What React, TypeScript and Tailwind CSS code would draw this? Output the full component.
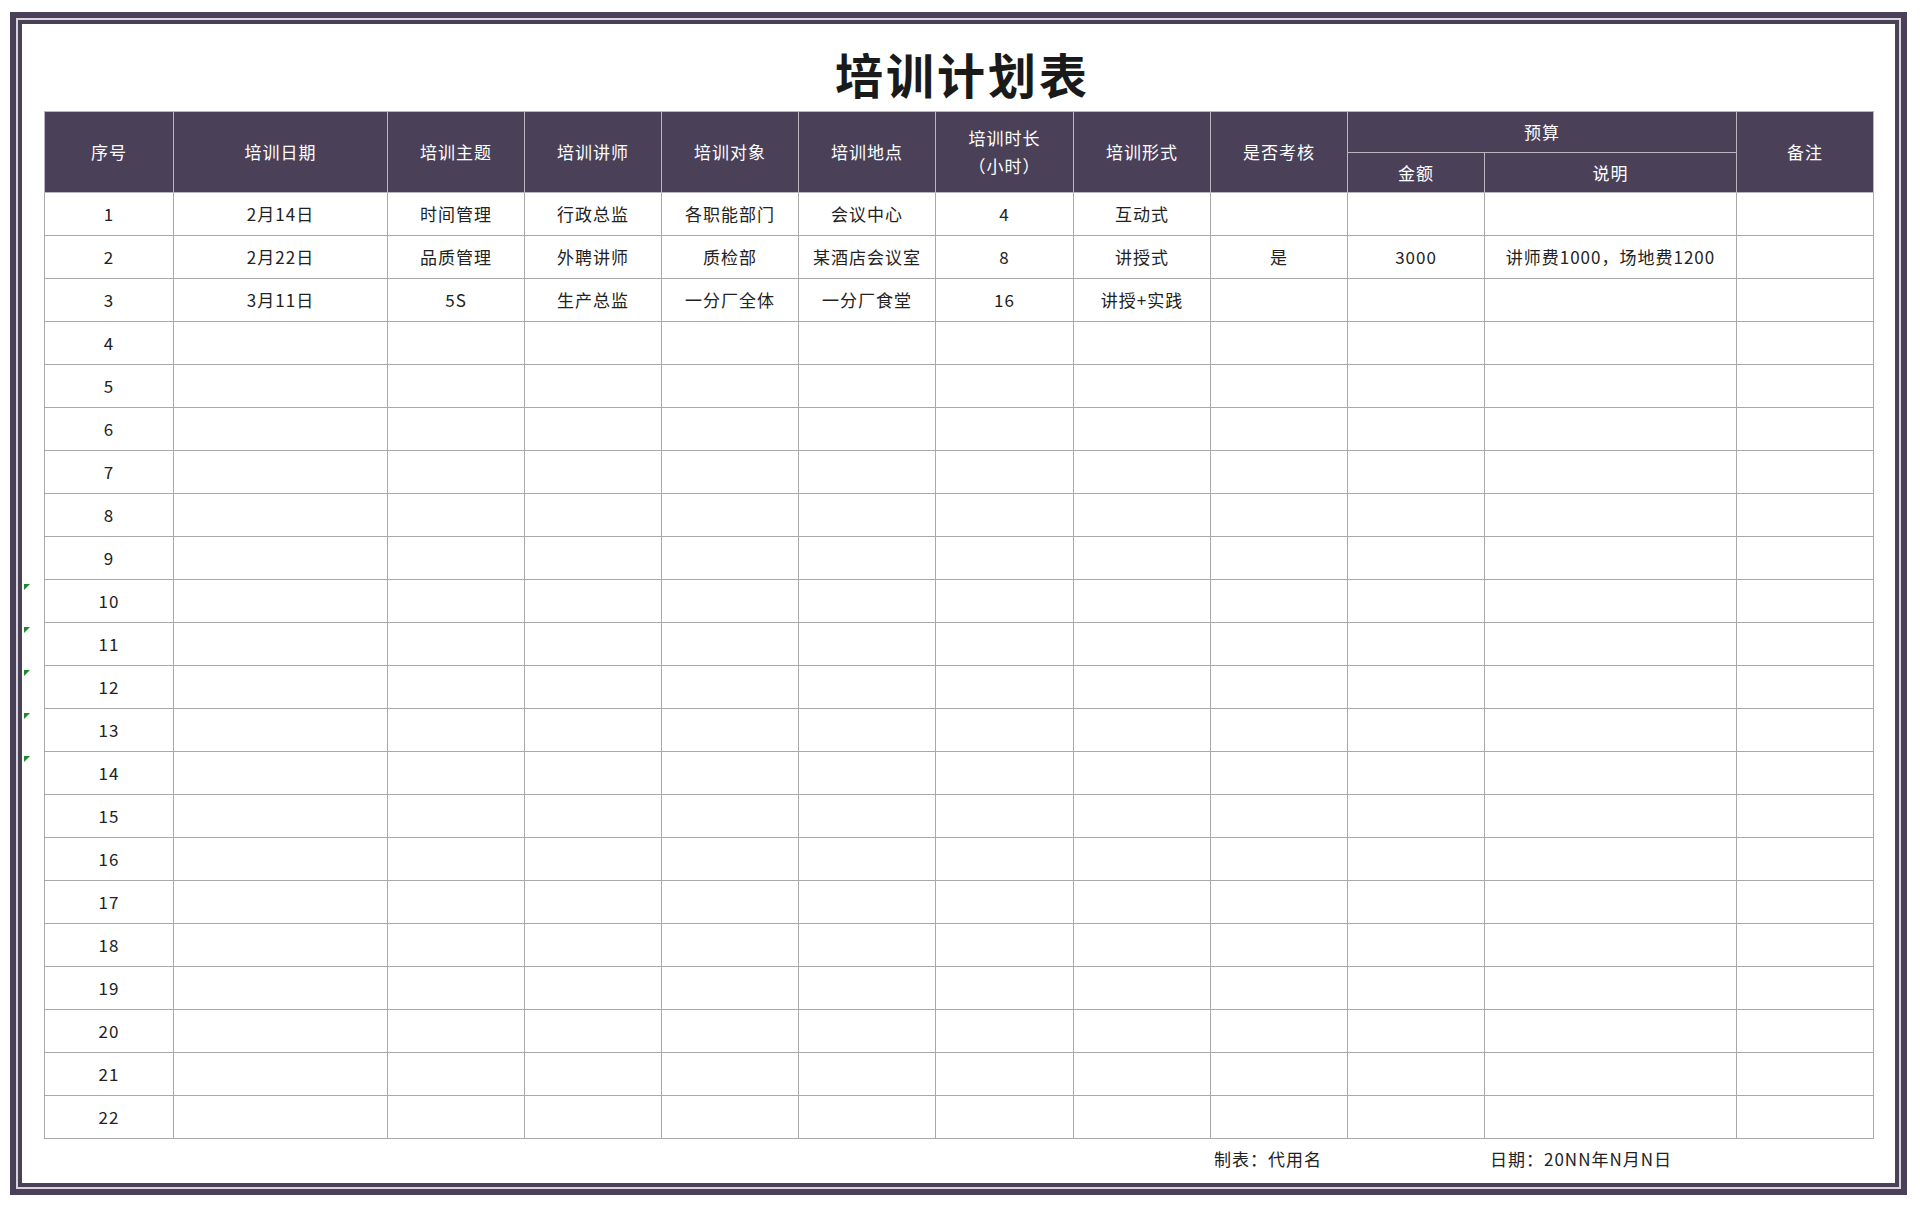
const cols = [129, 214, 137, 137, 137, 137, 138, 137, 137, 137, 252, 137];

const data: Record<number, string[]> = {
  1: ["2月14日", "时间管理", "行政总监", "各职能部门", "会议中心", "4", "互动式", "", "", "", ""],
  2: ["2月22日", "品质管理", "外聘讲师", "质检部", "某酒店会议室", "8", "讲授式", "是", "3000", "讲师费1000，场地费1200", ""],
  3: ["3月11日", "5S", "生产总监", "一分厂全体", "一分厂食堂", "16", "讲授+实践", "", "", "", ""],
};

const th = "border border-[#b9b6c0] bg-[#4a4159] text-white font-normal text-[17px] tracking-[1px] text-center";
const td = "border border-[#a9a9a9] text-center text-[17px] tracking-[1px] text-[#222] h-[43px] p-0 whitespace-nowrap";

export default function App() {
  const rows = Array.from({ length: 22 }, (_, i) => i + 1);
  return (
    <div
      className="w-[1920px] h-[1205px] bg-white pt-[12px] pl-[10px]"
      style={{ fontFamily: '"Noto Sans CJK SC", "Noto Sans", sans-serif' }}
    >
      <div className="w-[1897px] h-[1183px] bg-[#4a4159] p-[6px]">
        <div className="w-full h-full border-2 border-[#d8d6dc] bg-[#4a4159] p-[4px]">
          <div className="relative w-full h-full bg-white pl-[22px] pr-[14px] pt-[14px]">
            <h1 className="text-center text-[48px] font-bold leading-[70px] tracking-[3px] text-[#1a1a1a] h-[73px]">
              培训计划表
            </h1>
            <table className="border-collapse table-fixed" style={{ width: 1829 }}>
              <colgroup>
                {cols.map((w, i) => (
                  <col key={i} style={{ width: w }} />
                ))}
              </colgroup>
              <thead>
                <tr className="h-[41px]">
                  <th rowSpan={2} className={th}>序号</th>
                  <th rowSpan={2} className={th}>培训日期</th>
                  <th rowSpan={2} className={th}>培训主题</th>
                  <th rowSpan={2} className={th}>培训讲师</th>
                  <th rowSpan={2} className={th}>培训对象</th>
                  <th rowSpan={2} className={th}>培训地点</th>
                  <th rowSpan={2} className={`${th} leading-[28px]`}>培训时长<br />（小时）</th>
                  <th rowSpan={2} className={th}>培训形式</th>
                  <th rowSpan={2} className={th}>是否考核</th>
                  <th colSpan={2} className={th}>预算</th>
                  <th rowSpan={2} className={th}>备注</th>
                </tr>
                <tr className="h-[40px]">
                  <th className={th}>金额</th>
                  <th className={th}>说明</th>
                </tr>
              </thead>
              <tbody>
                {rows.map((n) => {
                  const r = data[n] ?? Array(11).fill("");
                  return (
                    <tr key={n}>
                      <td className={td}>{n}</td>
                      {r.map((c, j) => (
                        <td key={j} className={td}>{c}</td>
                      ))}
                    </tr>
                  );
                })}
              </tbody>
            </table>
            <div className="flex text-[17px] tracking-[1px] text-[#222] mt-[7px]">
              <span className="ml-[1170px]">制表：代用名</span>
              <span className="ml-[168px]">日期：20NN年N月N日</span>
            </div>
            {[0, 1, 2, 3, 4].map((k) => (
              <div
                key={k}
                className="absolute left-[2px] w-0 h-0 border-t-[6px] border-r-[6px] border-t-[#1e8a2e] border-r-transparent"
                style={{ top: 560 + k * 43 }}
              />
            ))}
          </div>
        </div>
      </div>
    </div>
  );
}
